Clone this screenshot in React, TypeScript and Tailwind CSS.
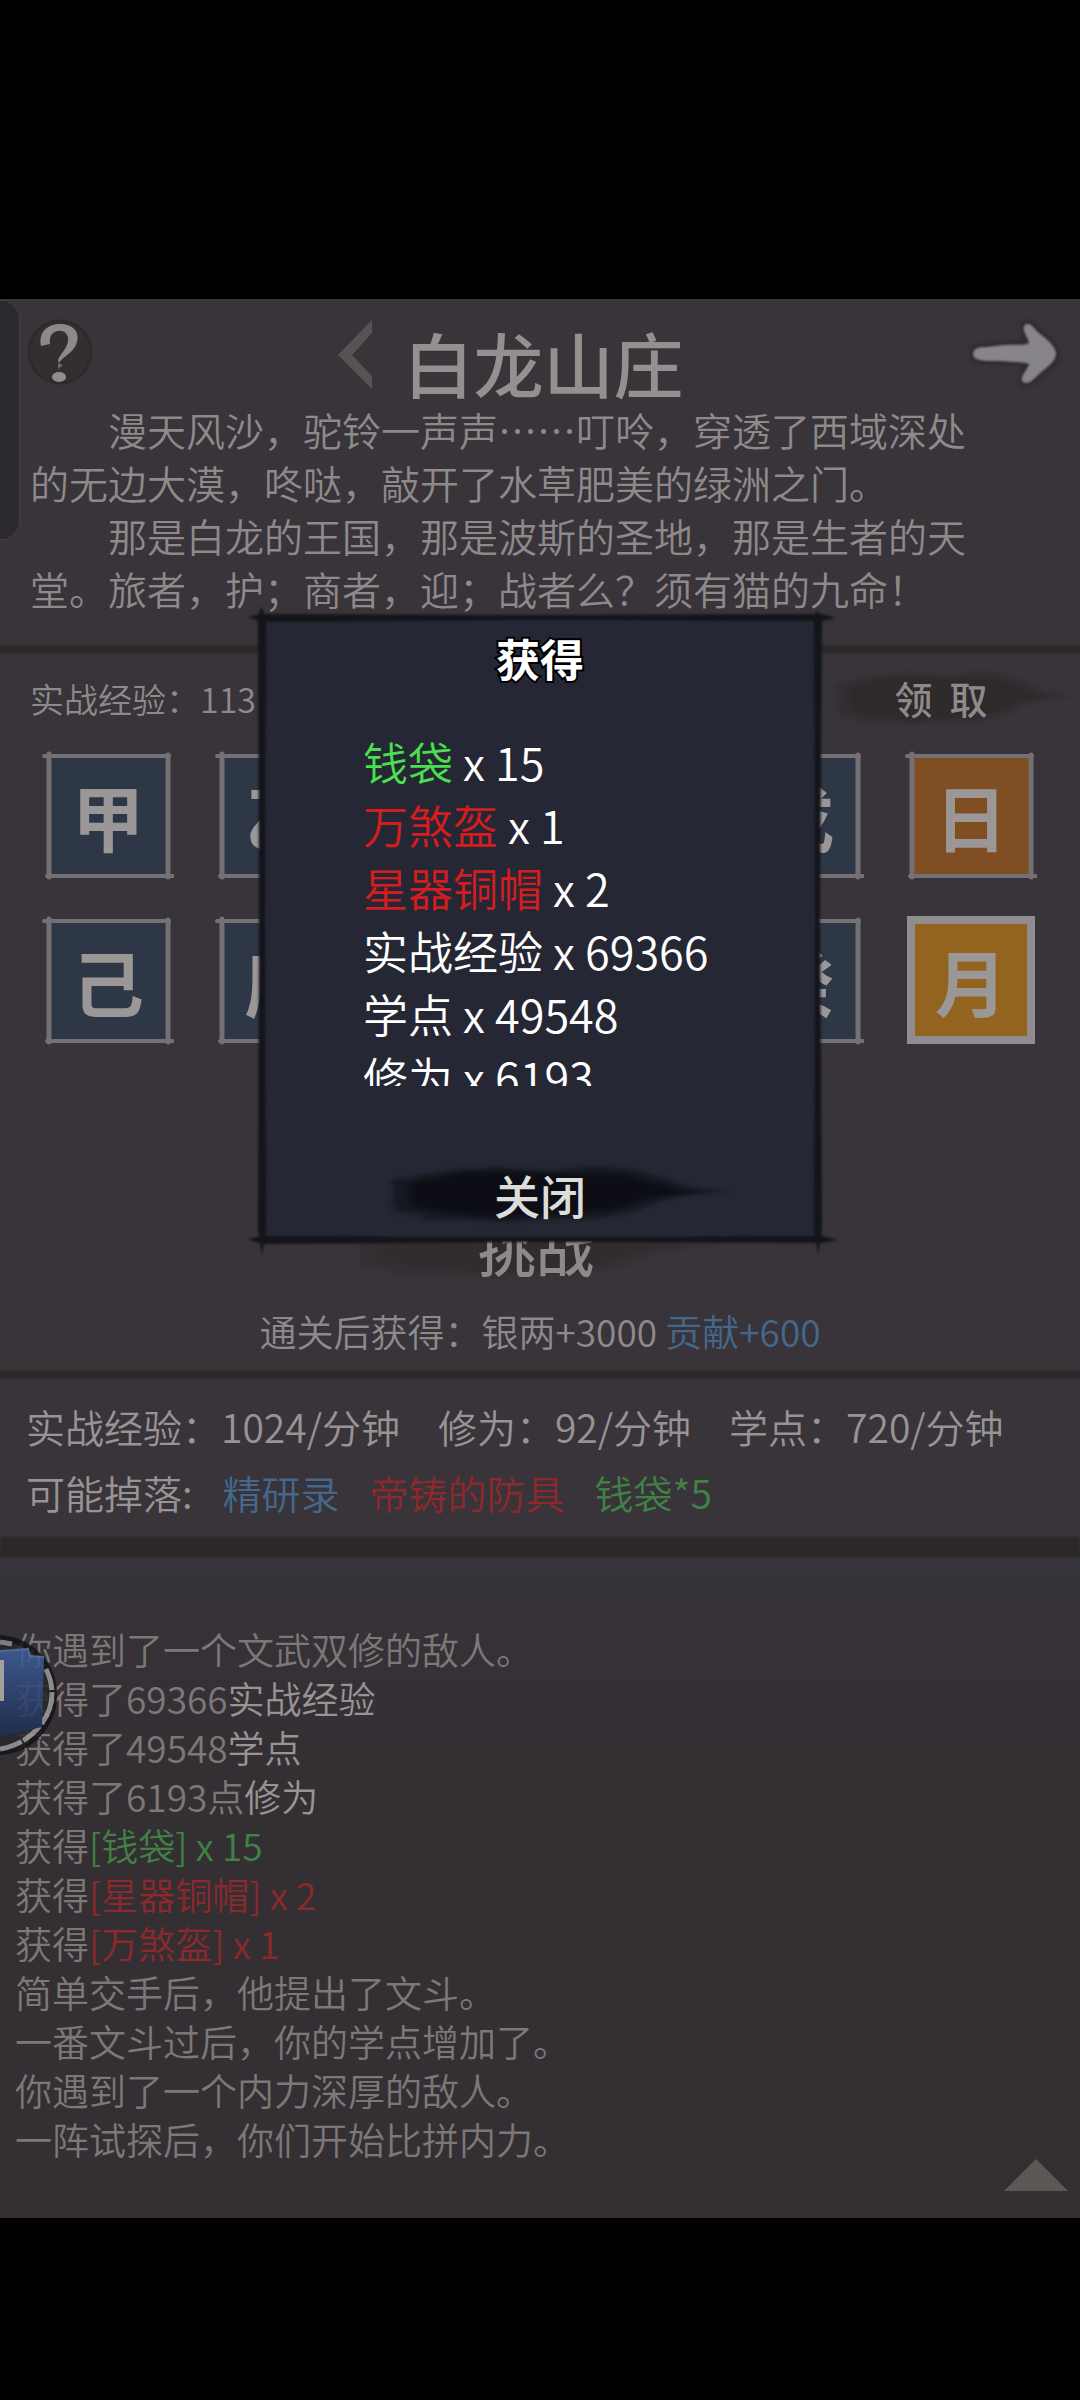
import { clsx } from "clsx";

// ---------------------------------------------------------------------------
// Data
// ---------------------------------------------------------------------------

type Tone = "plain" | "bright" | "green" | "red" | "blue";

interface Part {
  text: string;
  tone?: Tone;
}

interface Reward {
  name: string;
  count: number;
  tone: string;
}

const INTRO = [
  "漫天风沙，驼铃一声声……叮呤，穿透了西域深处的无边大漠，咚哒，敲开了水草肥美的绿洲之门。",
  "那是白龙的王国，那是波斯的圣地，那是生者的天堂。旅者，护；商者，迎；战者么？须有猫的九命！",
];

const STAGES = ["甲", "乙", "丙", "丁", "戊", "日", "己", "庚", "辛", "壬", "癸", "月"];

const RATES = ["实战经验：1024/分钟", "修为：92/分钟", "学点：720/分钟"];

const REWARDS: Reward[] = [
  { name: "钱袋", count: 15, tone: "text-[#49df4e]" },
  { name: "万煞盔", count: 1, tone: "text-[#d51c1f]" },
  { name: "星器铜帽", count: 2, tone: "text-[#d51c1f]" },
  { name: "实战经验", count: 69366, tone: "text-white" },
  { name: "学点", count: 49548, tone: "text-white" },
  { name: "修为", count: 6193, tone: "text-white" },
];

const LOG: Part[][] = [
  [{ text: "你遇到了一个文武双修的敌人。" }],
  [{ text: "获得了69366" }, { text: "实战经验", tone: "bright" }],
  [{ text: "获得了49548" }, { text: "学点", tone: "bright" }],
  [{ text: "获得了6193点" }, { text: "修为", tone: "bright" }],
  [{ text: "获得" }, { text: "[钱袋] x 15", tone: "green" }],
  [{ text: "获得" }, { text: "[星器铜帽] x 2", tone: "red" }],
  [{ text: "获得" }, { text: "[万煞盔] x 1", tone: "red" }],
  [{ text: "简单交手后，他提出了文斗。" }],
  [{ text: "一番文斗过后，你的学点增加了。" }],
  [{ text: "你遇到了一个内力深厚的敌人。" }],
  [{ text: "一阵试探后，你们开始比拼内力。" }],
];

const TONES: Record<Tone, string> = {
  plain: "text-[#7d7778]",
  bright: "text-[#999394]",
  green: "text-[#408245]",
  red: "text-[#8c292d]",
  blue: "text-[#44688b]",
};

// ---------------------------------------------------------------------------
// Drawings
// ---------------------------------------------------------------------------

function Brush({ className }: { className?: string }) {
  return (
    <svg
      className={clsx("absolute inset-0 h-full w-full overflow-visible blur-[2px]", className)}
      viewBox="0 0 340 60"
      preserveAspectRatio="none"
      fill="currentColor"
      aria-hidden="true"
    >
      <path
        opacity="0.55"
        d="M8 15 L22 14 L40 10 L66 6 L110 3 L160 7 L205 2 L240 5 L272 14 L296 23 L338 27 L300 30 L268 37 L246 47 L205 55 L160 55 L110 58 L70 55 L30 56 L44 52 L14 49 L6 45 L14 42 L4 39 L12 33 L5 27 L13 24 L5 19 Z"
      />
      <path
        opacity="0.75"
        d="M22 20 L50 14 L80 8 L130 8 L190 10 L232 10 L262 19 L286 26 L318 28 L276 31 L250 36 L226 45 L185 49 L120 53 L70 50 L34 44 L24 42 L32 38 L20 35 L30 31 L18 27 L28 24 Z"
      />
    </svg>
  );
}

function QuestionIcon() {
  return (
    <svg viewBox="0 0 66 66" className="size-[66px]" aria-hidden="true">
      <circle cx="33" cy="33" r="31" fill="#332f2f" stroke="#2e2a2a" strokeWidth="3" />
      <path
        d="M14 27 C11 12 22 5 33 5 C45 5 53 12 50 23 C47 34 36 37 32 44 L31 41 C33 35 40 30 41 22 C42 15 37 11 31 12 C25 13 22 17 23 25 Z"
        fill="#8d898a"
      />
      <path d="M31 44 l5 2 -5 4 z" fill="#6d6869" />
      <ellipse cx="32" cy="58" rx="7" ry="5" fill="#918d8e" />
    </svg>
  );
}

function ArrowIcon() {
  return (
    <svg viewBox="0 0 92 70" className="h-[70px] w-[92px] overflow-visible" aria-hidden="true">
      <path
        d="M5 35 C5 29 11 28 18 28 L36 26 C46 25 55 27 61 24 C60 18 54 12 56 7 C59 3 63 5 66 9 C73 17 87 24 88 34 C89 43 76 50 68 58 C63 64 57 66 54 62 C52 57 60 50 61 45 C50 42 36 43 24 42 C13 42 5 41 5 35 Z"
        fill="#2c272a"
        stroke="#2c272a"
        strokeWidth="6"
        className="blur-[2px]"
      />
      <path
        d="M5 35 C5 29 11 28 18 28 L36 26 C46 25 55 27 61 24 C60 18 54 12 56 7 C59 3 63 5 66 9 C73 17 87 24 88 34 C89 43 76 50 68 58 C63 64 57 66 54 62 C52 57 60 50 61 45 C50 42 36 43 24 42 C13 42 5 41 5 35 Z"
        fill="#88858a"
        className="blur-[1px]"
      />
    </svg>
  );
}

function TileFrame({ orange }: { orange: boolean }) {
  return (
    <svg viewBox="0 0 132 132" className="absolute -inset-1 size-[132px]" aria-hidden="true">
      <rect x="6" y="7" width="120" height="120" fill={orange ? "#7f4e22" : "#2d3746"} />
      <g fill="none" stroke="#747175" strokeLinecap="round">
        <path d="M2 7 L127 7" strokeWidth="4" />
        <path d="M5 127 L131 127" strokeWidth="4" />
        <path d="M7 5 L7 128" strokeWidth="5" />
        <path d="M126 6 L126 128" strokeWidth="5" />
      </g>
    </svg>
  );
}

function PopupFrame() {
  return (
    <svg
      className="absolute inset-0 h-full w-full overflow-visible blur-[1px]"
      viewBox="0 0 556 620"
      preserveAspectRatio="none"
      fill="#14141b"
      aria-hidden="true"
    >
      <path d="M-14 -1 L0 -4 L280 -3 L560 -4 L574 0 L560 3 L280 2 L0 4 Z" />
      <path d="M-14 619 L0 616 L280 617 L560 616 L576 620 L560 623 L280 622 L0 624 Z" />
      <path d="M-1 -12 L4 0 L3 300 L4 610 L0 636 L-4 610 L-3 300 L-4 0 Z" />
      <path d="M555 -8 L560 0 L558 300 L560 610 L556 634 L552 610 L553 300 L552 0 Z" />
    </svg>
  );
}

function FloatingBadge() {
  return (
    <svg viewBox="0 0 60 124" className="absolute left-0 top-[1334px] h-[124px] w-[60px] opacity-85" aria-hidden="true">
      <defs>
        <linearGradient id="badge-blue" x1="0" y1="0" x2="0" y2="1">
          <stop offset="0" stopColor="#3f5f9c" />
          <stop offset="1" stopColor="#1d2c52" />
        </linearGradient>
      </defs>
      <circle cx="-3" cy="62" r="57" fill="#27262b" stroke="#141317" strokeWidth="6" />
      <path d="M0 9 L12 11" stroke="#8b8b8d" strokeWidth="5" />
      <path
        d="M46 36 C55 54 54 74 42 90 C32 104 18 113 0 116"
        fill="none"
        stroke="#9a9b9d"
        strokeWidth="5"
        strokeDasharray="22 2 34 3"
      />
      <path d="M0 18 L28 16 L30 23 L44 24 L42 94 L0 104 Z" fill="url(#badge-blue)" />
      <path d="M0 18 L28 16 L30 23 L44 24" fill="none" stroke="#55719f" strokeWidth="2" />
      <rect x="0" y="27" width="4" height="41" fill="#b7b5ac" />
    </svg>
  );
}

// ---------------------------------------------------------------------------
// Sections
// ---------------------------------------------------------------------------

function Divider({ className }: { className: string }) {
  return <div className={clsx("w-full bg-[#2c2828] blur-[1px]", className)} />;
}

function Header() {
  return (
    <header className="pt-5">
      <div className="flex items-start pl-[27px] pr-5">
        <div className="flex flex-1 items-start justify-between">
          <button type="button" aria-label="帮助">
            <QuestionIcon />
          </button>
          <button type="button" aria-label="上一个">
            <svg viewBox="0 0 34 70" className="h-[70px] w-[34px]" aria-hidden="true">
              <path d="M34 1 L34 14 L14 36 L34 57 L34 70 L0 36 Z" fill="#575352" />
            </svg>
          </button>
        </div>
        <h1 className="mx-8 mt-1 text-[70px] leading-[80px] font-medium text-[#959090]">白龙山庄</h1>
        <div className="flex flex-1 justify-end">
          <button type="button" aria-label="前进">
            <ArrowIcon />
          </button>
        </div>
      </div>
      <div className="mb-[30px] ml-[30px] max-w-[940px] text-[39px] leading-[53px] text-[#8e898a]">
        {INTRO.map((text) => (
          <p key={text} className="indent-[2em]">
            {text}
          </p>
        ))}
      </div>
    </header>
  );
}

function StageTile({ name, selected }: { name: string; selected: boolean }) {
  return (
    <button
      type="button"
      aria-pressed={selected}
      className={clsx(
        "relative flex size-[124px] items-center justify-center",
        selected && "bg-[#93641f] outline-8 -outline-offset-6 outline-[#918d8e]",
      )}
    >
      {!selected && <TileFrame orange={name === "日"} />}
      <span className="relative text-[72px] leading-[96px] font-bold text-[#9b9797]">{name}</span>
    </button>
  );
}

function StageSection() {
  return (
    <section>
      <div className="flex h-[90px] items-center justify-between pl-[30px] pr-1">
        <p className="text-[34px] text-[#8e898a]">实战经验：113</p>
        <button
          type="button"
          className="relative h-14 w-[244px] pr-[26px] text-[38px] leading-[56px] font-medium whitespace-pre text-[#8e8a8a]"
        >
          <Brush className="text-[#2d282a]" />
          <span className="relative">领  取</span>
        </button>
      </div>
      <div className="grid grid-cols-[repeat(6,124px)] justify-between gap-y-[41px] pt-[10px] pl-[46px] pr-[47px]">
        {STAGES.map((name) => (
          <StageTile key={name} name={name} selected={name === "月"} />
        ))}
      </div>
      <div className="mt-[173px] flex justify-center">
        <button
          type="button"
          className="relative h-16 w-[380px] pr-2 text-[58px] leading-[64px] font-medium text-[#8e8a8a]"
        >
          <Brush className="text-[#312b2d]" />
          <span className="relative">挑战</span>
        </button>
      </div>
      <p className="mt-6 pb-3 text-center text-[37px] leading-[56px] text-[#8e898a]">
        通关后获得：银两+3000 <span className={TONES.blue}>贡献+600</span>
      </p>
    </section>
  );
}

function RateSection() {
  return (
    <section className="pt-[14px] pb-3 pl-[26px] text-[39px] leading-[66px] text-[#989394]">
      <div className="flex flex-wrap gap-x-[38px]">
        {RATES.map((rate) => (
          <span key={rate}>{rate}</span>
        ))}
      </div>
      <div className="flex flex-wrap gap-x-[30px]">
        <span>可能掉落:</span>
        <span className={TONES.blue}>精研录</span>
        <span className={TONES.red}>帝铸的防具</span>
        <span className={TONES.green}>钱袋*5</span>
      </div>
    </section>
  );
}

function BattleLog() {
  return (
    <section className="flex flex-1 bg-[#342f33] bg-linear-to-b from-[#36333a] to-[#342f33] to-30%">
      <ul className="flex-1 pt-[68px] pl-[15px] text-[37px] leading-[49px]">
        {LOG.map((parts, i) => (
          <li key={i}>
            {parts.map((part) => (
              <span key={part.text} className={TONES[part.tone ?? "plain"]}>
                {part.text}
              </span>
            ))}
          </li>
        ))}
      </ul>
      <button type="button" aria-label="展开" className="mr-3 mb-[27px] self-end">
        <svg viewBox="0 0 64 32" className="h-8 w-16" aria-hidden="true">
          <path d="M32 0 L64 32 L0 32 Z" fill="#5b5755" />
        </svg>
      </button>
    </section>
  );
}

function RewardPopup() {
  return (
    <div
      role="dialog"
      aria-labelledby="reward-title"
      className="absolute top-[319px] left-1/2 flex w-[556px] -translate-x-1/2 flex-col items-center bg-[#252834] pb-4"
    >
      <PopupFrame />
      <h2
        id="reward-title"
        className="relative pt-2 text-[44px] leading-[64px] font-bold text-white [paint-order:stroke] [-webkit-text-stroke:4px_black]"
      >
        获得
      </h2>
      <ul className="relative mt-10 h-[356px] self-stretch overflow-hidden pl-[101px] text-[45px] leading-[63px] text-white">
        {REWARDS.map((reward) => (
          <li key={reward.name}>
            <span className={reward.tone}>{reward.name}</span> x {reward.count}
          </li>
        ))}
      </ul>
      <button
        type="button"
        className="relative mt-[78px] ml-[38px] h-[60px] w-[350px] pr-[38px] text-[46px] leading-[56px] font-medium text-[#dcdcdb]"
      >
        <Brush className="text-[#0b0c11]" />
        <span className="relative">关闭</span>
      </button>
    </div>
  );
}

export default function App() {
  return (
    <div
      lang="zh-CN"
      className="flex min-h-screen flex-col bg-black pt-[299px] pb-[182px] font-['Noto_Sans_CJK_SC',sans-serif] font-[350]"
    >
      <main className="relative flex flex-1 flex-col overflow-hidden bg-[#38343a]">
        <Header />
        <Divider className="h-2" />
        <StageSection />
        <Divider className="h-2" />
        <RateSection />
        <Divider className="h-5" />
        <BattleLog />
        <div className="absolute top-px left-0 h-60 w-5 rounded-r-[18px] border border-l-0 border-[#423f3f] bg-[#2b292e]" />
        <FloatingBadge />
        <RewardPopup />
      </main>
    </div>
  );
}
